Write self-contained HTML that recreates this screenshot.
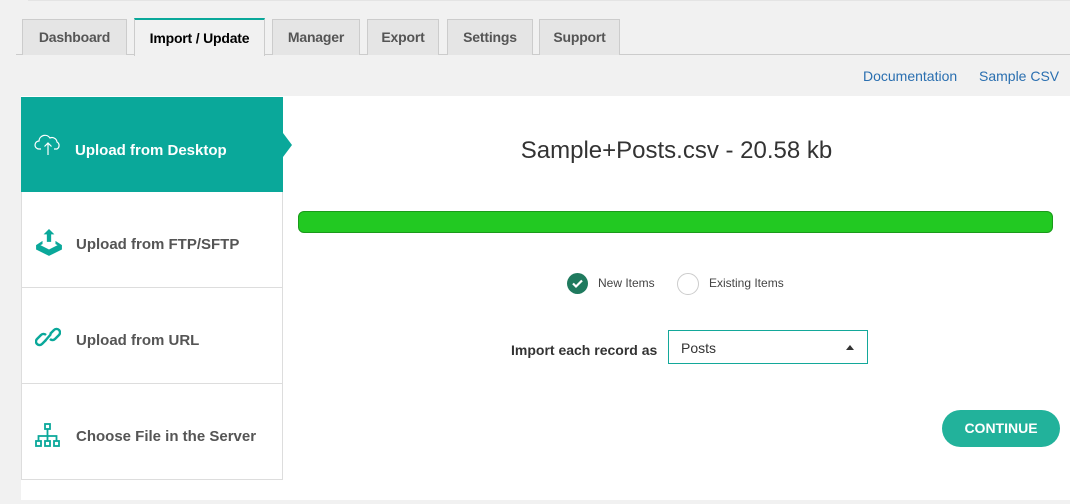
<!DOCTYPE html>
<html><head><style>
*{box-sizing:border-box;margin:0;padding:0}
body{width:1070px;height:504px;background:#f1f1f1;font-family:"Liberation Sans",sans-serif;position:relative;overflow:hidden}
.top{position:absolute;left:28px;top:0;right:0;height:1px;background:#e4e4e4}
.line{position:absolute;left:16px;right:0;top:54px;height:1px;background:#ccc}
.tab{position:absolute;top:19px;height:36px;background:#e5e5e5;border:1px solid #ccc;border-bottom:none;font-size:14px;font-weight:bold;color:#555;text-align:center;line-height:35px;letter-spacing:-0.2px}
.tab.act{background:#f1f1f1;color:#000;border-top:2px solid #0aa89a;top:18px;height:38px;line-height:36px}
.links{position:absolute;top:68px;font-size:14px;color:#2a6fb0}
.panel{position:absolute;left:21px;top:96px;width:1049px;height:404px;background:#fff}
.item{position:absolute;left:21px;width:262px;height:96px;border:1px solid #ddd;border-top:none;background:#fff;font-size:15px;font-weight:bold;color:#555}
.item span{position:absolute;left:54px;top:44px}
.item svg{position:absolute;left:13px}
.active{position:absolute;left:21px;top:97px;width:262px;height:95px;background:#0aa89a;color:#fff;font-size:15px;font-weight:bold}
.arrow{position:absolute;left:283px;top:133px;width:0;height:0;border-top:12px solid transparent;border-bottom:12px solid transparent;border-left:9px solid #0aa89a}
</style></head><body>
<div class="top"></div>
<div class="line"></div>
<div class="tab" style="left:22px;width:105px">Dashboard</div>
<div class="tab act" style="left:134px;width:131px">Import / Update</div>
<div class="tab" style="left:272px;width:88px">Manager</div>
<div class="tab" style="left:367px;width:72px">Export</div>
<div class="tab" style="left:447px;width:86px">Settings</div>
<div class="tab" style="left:539px;width:81px">Support</div>
<div class="links" style="left:863px">Documentation</div>
<div class="links" style="left:979px">Sample CSV</div>
<div class="panel"></div>
<div class="active"><svg style="position:absolute;left:13px;top:36px" width="28" height="24" viewBox="0 0 28 24" fill="none" stroke="#fff" stroke-width="1.2"><path d="M7 16H5a4 4 0 0 1 0-8 6 6 0 0 1 11-3 5 5 0 0 1 7 4 4 4 0 0 1 0 7h-3"/><path d="M14 22V10M10.5 13.5L14 10l3.5 3.5"/></svg><span style="position:absolute;left:54px;top:45px">Upload from Desktop</span></div>
<div class="arrow"></div>
<div class="item" style="top:192px"><svg style="top:37px" width="28" height="28" viewBox="0 0 26 26" fill="#0aa89a"><path d="M13 0l-5 5h3v7h4V5h3z"/><path d="M1 15l6-4v3l-2 1 8 4 8-4-2-1v-3l6 4v4l-12 6-12-6z"/></svg><span>Upload from FTP/SFTP</span></div>
<div class="item" style="top:288px"><svg style="top:35px" width="26" height="28" viewBox="0 0 26 28" fill="none" stroke="#0aa89a" stroke-width="2.4"><path d="M11 17l-4 4a3.5 3.5 0 0 1-5-5l4-4a3.5 3.5 0 0 1 5 0"/><path d="M15 11l4-4a3.5 3.5 0 0 1 5 5l-4 4a3.5 3.5 0 0 1-5 0"/><path d="M10 18l6-7"/></svg><span>Upload from URL</span></div>
<div class="item" style="top:384px"><svg style="top:39px" width="26" height="26" viewBox="0 0 26 26" fill="none" stroke="#0aa89a" stroke-width="1.8"><rect x="10" y="1" width="5" height="5"/><rect x="1" y="18" width="5" height="5"/><rect x="10" y="18" width="5" height="5"/><rect x="19" y="18" width="5" height="5"/><path d="M12.5 6v12M3.5 18v-5h18v5"/></svg><span>Choose File in the Server</span></div>
<div style="position:absolute;left:283px;width:787px;top:137px;text-align:center;font-size:24px;color:#333">Sample+Posts.csv - 20.58 kb</div>
<div style="position:absolute;left:298px;top:211px;width:755px;height:22px;background:#22c922;border:1px solid #1a9a1a;border-radius:6px"></div>
<div style="position:absolute;left:567px;top:273px;width:21px;height:21px;border-radius:50%;background:#1f7a5e"><svg width="21" height="21" viewBox="0 0 21 21"><path d="M6 10.5l3 3 6-6" fill="none" stroke="#fff" stroke-width="2.2"/></svg></div>
<div style="position:absolute;left:598px;top:276px;font-size:12px;color:#444">New Items</div>
<div style="position:absolute;left:677px;top:273px;width:22px;height:22px;border-radius:50%;border:1px solid #ccc;background:#fff"></div>
<div style="position:absolute;left:709px;top:276px;font-size:12px;color:#444">Existing Items</div>
<div style="position:absolute;left:511px;top:342px;font-size:14px;font-weight:bold;color:#333">Import each record as</div>
<div style="position:absolute;left:668px;top:330px;width:200px;height:34px;border:1px solid #13a89a;background:#fff;font-size:14px;color:#333;padding:9px 12px">Posts<span style="position:absolute;right:13px;top:14px;width:0;height:0;border-left:4px solid transparent;border-right:4px solid transparent;border-bottom:5px solid #333"></span></div>
<div style="position:absolute;left:942px;top:410px;width:118px;height:37px;border-radius:19px;background:#22b29b;color:#fff;font-size:14px;font-weight:bold;text-align:center;line-height:37px">CONTINUE</div>
</body></html>
